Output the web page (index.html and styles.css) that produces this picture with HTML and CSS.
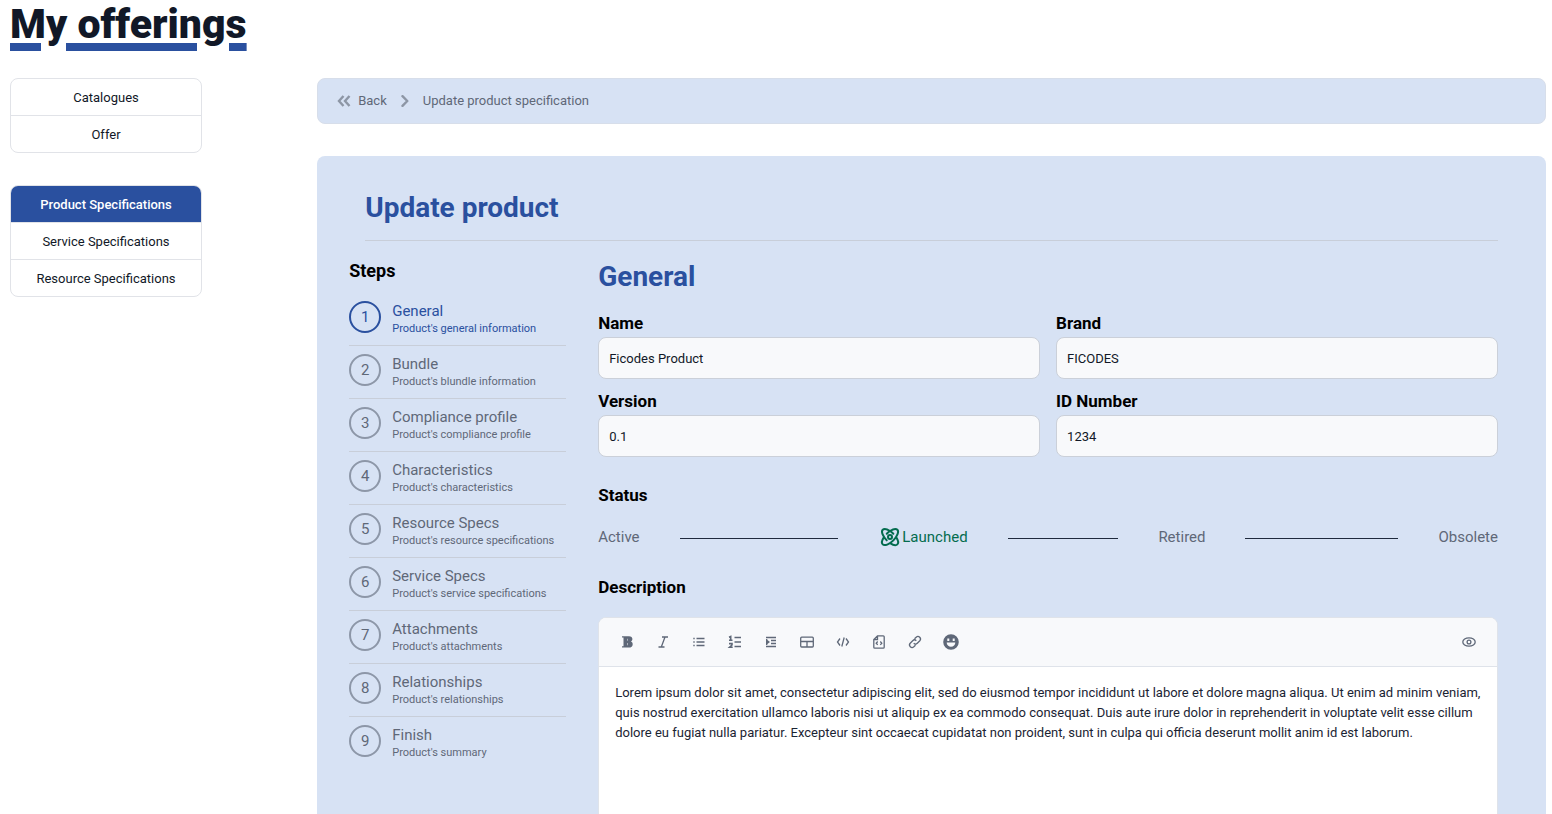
FILE: index.html
```html
<!DOCTYPE html>
<html lang="en">
<head>
<meta charset="utf-8">
<title>My offerings</title>
<link rel="stylesheet" href="styles.css">
</head>
<body>
<h1 class="page-title">My offerings</h1>
<div class="layout">
  <aside class="sidebar">
    <div class="nav-group">
      <button type="button">Catalogues</button>
      <button type="button">Offer</button>
    </div>
    <div class="nav-group">
      <button type="button" class="active">Product Specifications</button>
      <button type="button">Service Specifications</button>
      <button type="button">Resource Specifications</button>
    </div>
  </aside>
  <main class="main">
    <nav class="breadcrumb" aria-label="Breadcrumb">
      <button type="button" class="back">
        <svg width="14" height="12" viewBox="0 0 14 12" fill="none" stroke="#8d96a5" stroke-width="2.400" aria-hidden="true"><path d="M6.500 1 2 6l4.500 5M12.500 1 8 6l4.500 5"/></svg>
        Back
      </button>
      <svg width="8" height="12" viewBox="0 0 8 12" fill="none" stroke="#8d96a5" stroke-width="2.400" stroke-linecap="round" stroke-linejoin="round" aria-hidden="true"><path d="m1.500 1.200 4.800 4.800-4.800 4.800"/></svg>
      <span>Update product specification</span>
    </nav>
    <section class="panel">
      <h2 class="panel-title">Update product</h2>
      <hr class="rule">
      <div class="columns">
        <div class="steps">
          <h3 class="steps-title">Steps</h3>
          <ol class="step-list">
            <li><button type="button" class="step current"><span class="num">1</span><span class="info"><span class="name">General</span><span class="hint">Product's general information</span></span></button></li>
            <li><button type="button" class="step"><span class="num">2</span><span class="info"><span class="name">Bundle</span><span class="hint">Product's blundle information</span></span></button></li>
            <li><button type="button" class="step"><span class="num">3</span><span class="info"><span class="name">Compliance profile</span><span class="hint">Product's compliance profile</span></span></button></li>
            <li><button type="button" class="step"><span class="num">4</span><span class="info"><span class="name">Characteristics</span><span class="hint">Product's characteristics</span></span></button></li>
            <li><button type="button" class="step"><span class="num">5</span><span class="info"><span class="name">Resource Specs</span><span class="hint">Product's resource specifications</span></span></button></li>
            <li><button type="button" class="step"><span class="num">6</span><span class="info"><span class="name">Service Specs</span><span class="hint">Product's service specifications</span></span></button></li>
            <li><button type="button" class="step"><span class="num">7</span><span class="info"><span class="name">Attachments</span><span class="hint">Product's attachments</span></span></button></li>
            <li><button type="button" class="step"><span class="num">8</span><span class="info"><span class="name">Relationships</span><span class="hint">Product's relationships</span></span></button></li>
            <li><button type="button" class="step"><span class="num">9</span><span class="info"><span class="name">Finish</span><span class="hint">Product's summary</span></span></button></li>
          </ol>
        </div>
        <form class="form">
          <h2 class="form-title">General</h2>
          <div class="fields">
            <div class="field"><label for="name">Name</label><input id="name" type="text" value="Ficodes Product"></div>
            <div class="field"><label for="brand">Brand</label><input id="brand" type="text" value="FICODES"></div>
            <div class="field"><label for="version">Version</label><input id="version" type="text" value="0.1"></div>
            <div class="field"><label for="idnum">ID Number</label><input id="idnum" type="text" value="1234"></div>
          </div>
          <h3 class="label status-label">Status</h3>
          <ol class="status">
            <li><button type="button">Active</button></li>
            <li class="launched"><button type="button"><svg width="24" height="24" viewBox="0 0 24 24" fill="none" stroke="currentColor" stroke-width="2" stroke-linecap="round" stroke-linejoin="round" aria-hidden="true"><path d="M8.737 8.737a21.490 21.490 0 0 1 3.308-2.724m0 0c3.063-2.026 5.990-2.641 7.331-1.300 1.827 1.828.026 6.591-4.023 10.640-4.049 4.049-8.812 5.850-10.640 4.023-1.330-1.330-.736-4.218 1.249-7.253m6.083-6.110c-3.063-2.026-5.990-2.641-7.331-1.300-1.827 1.828-.026 6.591 4.023 10.640m3.308-9.340a21.497 21.497 0 0 1 3.308 2.724m2.775 3.386c1.985 3.035 2.579 5.923 1.248 7.253-1.336 1.337-4.245.732-7.295-1.275M14 12a2 2 0 1 1-4 0 2 2 0 0 1 4 0Z"/></svg>Launched</button></li>
            <li><button type="button">Retired</button></li>
            <li><button type="button">Obsolete</button></li>
          </ol>
          <label class="label" for="description">Description</label>
          <div class="editor">
            <div class="toolbar">
              <button type="button" aria-label="Bold"><svg viewBox="0 0 16 16"><path fill="currentColor" stroke="none" fill-rule="evenodd" d="M3 2.200h7c2.200 0 3.400 1.200 3.400 2.900 0 1.200-.6 2-1.400 2.500 1.100.4 1.700 1.400 1.700 2.600 0 2.100-1.500 3.400-3.900 3.400H3V12.200h1.500V3.600H3ZM8.300 4.800v2h.5V4.800Zm0 4.300v2.200h.5V9.100Z"/></svg></button>
              <button type="button" aria-label="Italic"><svg viewBox="0 0 16 16"><path d="M7 3h6M3.500 13h6M10 3l-3.700 10"/></svg></button>
              <button type="button" aria-label="Bullet list"><svg viewBox="0 0 16 16"><path d="M5.500 4.500h8M5.500 8h8M5.500 11.500h8M2.300 4.500h1.400M2.300 8h1.400M2.300 11.500h1.400"/></svg></button>
              <button type="button" aria-label="Numbered list"><svg viewBox="0 0 16 16"><path stroke-width="1.600" d="M7.500 3.500H14M7.500 8H14M7.500 12.500H14M2 3.200l1.700-.7V6.300M2 6.300h3.500M2 9.600h3V11L2.600 13.200H5.700"/></svg></button>
              <button type="button" aria-label="Indent"><svg viewBox="0 0 16 16"><path d="M3 3.500h10M3 12.500h10M8 6.500h5M8 9.500h5M3.700 5v6"/><path fill="currentColor" stroke="none" d="M3 5v6l4-3Z"/></svg></button>
              <button type="button" aria-label="Table"><svg viewBox="0 0 16 16"><rect x="1.700" y="3.200" width="12.600" height="9.800" rx="1"/><path d="M2 7.500h12M8 7.500V13"/></svg></button>
              <button type="button" aria-label="Code"><svg viewBox="0 0 16 16"><path d="M5 4.500 2.500 8 5 11.500M11 4.500 13.500 8 11 11.500M9.200 3.500l-2.400 9"/></svg></button>
              <button type="button" aria-label="Code block"><svg viewBox="0 0 16 16"><path d="M6.500 1.800h5.700c.6 0 1 .4 1 1v10.400c0 .6-.4 1-1 1H3.800c-.6 0-1-.4-1-1V5.500ZM6.500 2v3.500H3M6.700 7.500 5.200 9.200l1.500 1.700M9.300 7.500l1.500 1.700-1.500 1.700"/></svg></button>
              <button type="button" aria-label="Link"><svg viewBox="0 0 16 16"><path d="m7.500 4.800 1.700-1.600a2.550 2.550 0 0 1 3.600 3.600l-2.500 2.500a2.550 2.550 0 0 1-3.600 0M8.500 11.200l-1.700 1.600a2.550 2.550 0 0 1-3.600-3.600l2.500-2.500a2.550 2.550 0 0 1 3.600 0"/></svg></button>
              <button type="button" aria-label="Emoji"><svg viewBox="0 0 16 16"><path fill="currentColor" stroke="none" fill-rule="evenodd" d="M8 .2a7.800 7.800 0 1 1 0 15.600A7.800 7.800 0 0 1 8 .2ZM4.300 4.500V7h2V4.500Zm5.400 0V7h2V4.500ZM3.700 8.500a4.300 4.300 0 0 0 8.600 0Z"/></svg></button>
              <button type="button" class="preview" aria-label="Preview"><svg viewBox="0 0 16 16"><ellipse cx="8" cy="8" rx="6.200" ry="4.200"/><circle cx="8" cy="8" r="1.900"/></svg></button>
            </div>
            <textarea id="description" spellcheck="false">Lorem ipsum dolor sit amet, consectetur adipiscing elit, sed do eiusmod tempor incididunt ut labore et dolore magna aliqua. Ut enim ad minim veniam, quis nostrud exercitation ullamco laboris nisi ut aliquip ex ea commodo consequat. Duis aute irure dolor in reprehenderit in voluptate velit esse cillum dolore eu fugiat nulla pariatur. Excepteur sint occaecat cupidatat non proident, sunt in culpa qui officia deserunt mollit anim id est laborum.</textarea>
          </div>
        </form>
      </div>
    </section>
  </main>
</div>
</body>
</html>
```

FILE: styles.css
```css
:root {
  --primary: #2a509f;
  --surface: #d7e2f4;
  --muted: #5f6878;
  --line: #c8ced9;
}
* { box-sizing: border-box; }
body {
  margin: 0;
  padding: 0 6px 0 10px;
  background: #fff;
  color: #111827;
  font-family: Roboto, "Liberation Sans", sans-serif;
  font-size: 13px;
  line-height: 20px;
}
h1, h2, h3, ol { margin: 0; padding: 0; }
ol { list-style: none; }
button {
  padding: 0;
  border: 0;
  background: none;
  color: inherit;
  font: inherit;
  cursor: pointer;
}
.page-title {
  font-size: 41px;
  font-weight: 900;
  line-height: 48px;
  text-decoration: underline 8px var(--primary);
  text-underline-offset: 5px;
}
.layout {
  display: grid;
  grid-template-columns: 20% 80%;
  margin-top: 30px;
}
.sidebar {
  display: flex;
  flex-direction: column;
  gap: 32px;
  width: 192px;
}
.nav-group {
  display: flex;
  flex-direction: column;
  overflow: hidden;
  border: 1px solid #e1e3e8;
  border-radius: 8px;
}
.nav-group button { padding: 9px 16px 7px; }
.nav-group button + button { border-top: 1px solid #e1e3e8; }
.nav-group .active {
  background: var(--primary);
  color: #fff;
  font-weight: 500;
}
.main {
  display: flex;
  flex-direction: column;
  gap: 32px;
}
.breadcrumb {
  display: flex;
  align-items: center;
  gap: 14px;
  padding: 12px 19px;
  border: 1px solid #d7deea;
  border-radius: 8px;
  background: var(--surface);
  color: var(--muted);
}
.back {
  display: flex;
  align-items: center;
  gap: 7px;
}
.panel {
  padding: 32px 48px 32px 32px;
  border-radius: 8px;
  background: var(--surface);
}
.panel-title, .form-title {
  color: var(--primary);
  font-size: 28px;
  font-weight: 700;
  line-height: 40px;
}
.panel-title { padding-left: 16px; }
.rule {
  height: 1px;
  margin: 12px 0 16px 16px;
  border: 0;
  background: var(--line);
}
.columns {
  display: grid;
  grid-template-columns: 217px 1fr;
  gap: 32px;
}
.steps-title {
  margin-bottom: 8px;
  color: #000;
  font-size: 18px;
  line-height: 28px;
}
.step-list li + li { border-top: 1px solid var(--line); }
.step {
  display: flex;
  gap: 11px;
  width: 100%;
  padding: 8px 0;
  color: var(--muted);
  text-align: left;
}
.num {
  flex: none;
  width: 32px;
  height: 32px;
  border: 2px solid #8d97a8;
  border-radius: 50%;
  font-size: 15px;
  line-height: 28px;
  text-align: center;
}
.info {
  display: flex;
  flex-direction: column;
  white-space: nowrap;
}
.name {
  font-size: 15px;
  line-height: 20px;
}
.hint {
  font-size: 11px;
  line-height: 16px;
}
.current { color: var(--primary); }
.current .num { border-color: var(--primary); }
.form-title { margin-bottom: 12px; }
.fields {
  display: grid;
  grid-template-columns: 1fr 1fr;
  gap: 8px 16px;
}
.field label, .label {
  display: block;
  color: #000;
  font-size: 17px;
  font-weight: 700;
  line-height: 28px;
}
.field input {
  display: block;
  width: 100%;
  height: 42px;
  padding: 10px;
  border: 1px solid #cbd0d9;
  border-radius: 8px;
  background: #f8f9fb;
  color: inherit;
  font: inherit;
}
.status-label { margin-top: 24px; }
.status {
  display: grid;
  grid-template-columns: 1fr 1fr 1fr auto;
  gap: 40px;
  margin: 16px 0 24px;
  color: var(--muted);
  font-size: 15px;
  line-height: 24px;
}
.status li {
  display: flex;
  align-items: center;
  gap: 40px;
}
.status button {
  display: flex;
  align-items: center;
}
.status li:not(:last-child)::after {
  content: "";
  flex: 1;
  height: 1px;
  margin-top: 2px;
  background: #1f2a3d;
}
.launched button { color: #046c4e; }
.editor {
  margin-top: 16px;
  overflow: hidden;
  border: 1px solid #dfe3ea;
  border-radius: 8px;
  background: #fff;
}
.toolbar {
  display: flex;
  padding: 6px 10px;
  border-bottom: 1px solid #dfe3ea;
  background: #f8f9fb;
  color: var(--muted);
}
.toolbar button {
  display: flex;
  align-items: center;
  justify-content: center;
  width: 36px;
  height: 36px;
}
.toolbar svg {
  width: 16px;
  height: 16px;
  fill: none;
  stroke: currentColor;
  stroke-width: 1.300;
}
.toolbar .preview { margin-left: auto; }
.editor textarea {
  display: block;
  width: 100%;
  height: 240px;
  padding: 16px;
  border: 0;
  outline: 0;
  resize: none;
  color: #1b2433;
  font: inherit;
}
```
